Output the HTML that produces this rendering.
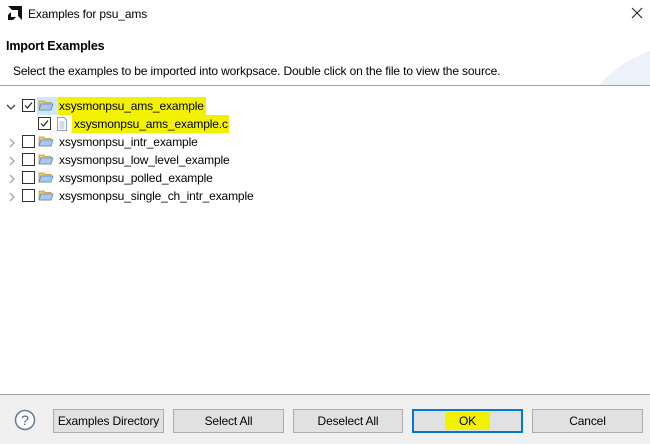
<!DOCTYPE html>
<html><head><style>
*{margin:0;padding:0;box-sizing:border-box}
body{width:650px;height:444px;position:relative;background:#fff;font-family:"Liberation Sans",sans-serif;font-size:12px;color:#000;overflow:hidden;letter-spacing:-0.15px}
.a{position:absolute;white-space:nowrap}
.row{position:absolute;height:18px;line-height:18px}
.cb{position:absolute;width:13px;height:13px;border:1px solid #333;background:#fff;top:2px}
.hl{background:#f2f200}
.btn{position:absolute;top:409px;height:24px;border:1px solid #adadad;background:#e1e1e1;text-align:center;line-height:22px;font-size:12px}
</style></head><body>
<svg class="a" style="left:7px;top:5px" width="16" height="16" viewBox="0 0 16 16"><path d="M1 1H15V15L11 11V5H5Z" fill="#111"/><path d="M4 7L1 10V15H6L9 12H4Z" fill="#111"/></svg>
<div class="a" style="left:28px;top:7px">Examples for psu_ams</div>
<svg class="a" style="left:631px;top:7px" width="12" height="12"><path d="M1 1L11 11M11 1L1 11" stroke="#222" stroke-width="1.1"/></svg>
<svg class="a" style="left:560px;top:25px" width="90" height="61"><ellipse cx="150" cy="110" rx="130" ry="95" fill="#edf1f9"/><ellipse cx="150" cy="120" rx="110" ry="72" fill="#dfe6f5"/></svg>
<div class="a" style="left:6px;top:39px;font-weight:bold;font-size:12.5px">Import Examples</div>
<div class="a" style="left:13px;top:64px">Select the examples to be imported into workpsace. Double click on the file to view the source.</div>
<div class="a" style="left:0;top:85px;width:650px;height:1px;background:#a0a0a0"></div>
<div class="a" style="left:37px;top:97px;width:22px;height:18px;background:#cde8ff"></div>
<div class="a hl" style="left:58px;top:97px;width:148px;height:18px"></div>
<div class="a hl" style="left:72px;top:115px;width:157px;height:18px"></div>
<svg class="a" style="left:0;top:96px" width="60" height="110">
<path d="M7 9L11 13L15 9" stroke="#444" stroke-width="1.3" fill="none"/>
<g stroke="#999" stroke-width="1.2" fill="none">
<path d="M10 43L14 47L10 51"/><path d="M10 61L14 65L10 69"/><path d="M10 79L14 83L10 87"/><path d="M10 97L14 101L10 105"/></g>
</svg>
<div class="cb" style="left:22px;top:99px"></div>
<svg class="a" style="left:22px;top:99px" width="13" height="13"><path d="M3 6.5L5.5 9L10 3.5" stroke="#222" stroke-width="1.2" fill="none"/></svg>
<div class="cb" style="left:38px;top:117px"></div>
<svg class="a" style="left:38px;top:117px" width="13" height="13"><path d="M3 6.5L5.5 9L10 3.5" stroke="#222" stroke-width="1.2" fill="none"/></svg>
<div class="cb" style="left:22px;top:135px"></div>
<div class="cb" style="left:22px;top:153px"></div>
<div class="cb" style="left:22px;top:171px"></div>
<div class="cb" style="left:22px;top:189px"></div>
<svg class="a" style="left:38px;top:98px" width="16" height="110">
<defs><g id="f"><path d="M1 3H6L7 4.5H13V12H1Z" fill="#f0c870" stroke="#c09030" stroke-width="0.8"/><path d="M3 6H15L13 12H1Z" fill="#a9c8ee" stroke="#5b86c0" stroke-width="0.8"/></g></defs>
<use href="#f"/><use href="#f" y="36"/><use href="#f" y="54"/><use href="#f" y="72"/><use href="#f" y="90"/>
</svg>
<svg class="a" style="left:56px;top:116px" width="12" height="16"><path d="M1.5 1.5H8L10.5 4V14.5H1.5Z" fill="#fff" stroke="#8ea0b8"/><path d="M3.5 6H8.5M3.5 8H8.5M3.5 10H8.5M3.5 12H8.5" stroke="#8ea0b8" stroke-width="0.8"/></svg>
<div class="row" style="left:59px;top:97px">xsysmonpsu_ams_example</div>
<div class="row" style="left:74px;top:115px">xsysmonpsu_ams_example.c</div>
<div class="row" style="left:59px;top:133px">xsysmonpsu_intr_example</div>
<div class="row" style="left:59px;top:151px">xsysmonpsu_low_level_example</div>
<div class="row" style="left:59px;top:169px">xsysmonpsu_polled_example</div>
<div class="row" style="left:59px;top:187px">xsysmonpsu_single_ch_intr_example</div>
<div class="a" style="left:0;top:394px;width:650px;height:50px;background:#f0f0f0;border-top:1px solid #a0a0a0"></div>
<svg class="a" style="left:14px;top:409px" width="22" height="22"><circle cx="11" cy="11" r="9.5" fill="#fff" stroke="#6a7a92" stroke-width="1.5"/><text x="11" y="16" text-anchor="middle" font-family="Liberation Sans" font-size="14" fill="#50607a">?</text></svg>
<div class="btn" style="left:53px;width:111px">Examples Directory</div>
<div class="btn" style="left:173px;width:111px">Select All</div>
<div class="btn" style="left:293px;width:110px">Deselect All</div>
<div class="btn" style="left:412px;width:111px;border:2px solid #0078d7;line-height:20px"><span class="hl" style="padding:2px 14px">OK</span></div>
<div class="btn" style="left:532px;width:111px">Cancel</div>
</body></html>
